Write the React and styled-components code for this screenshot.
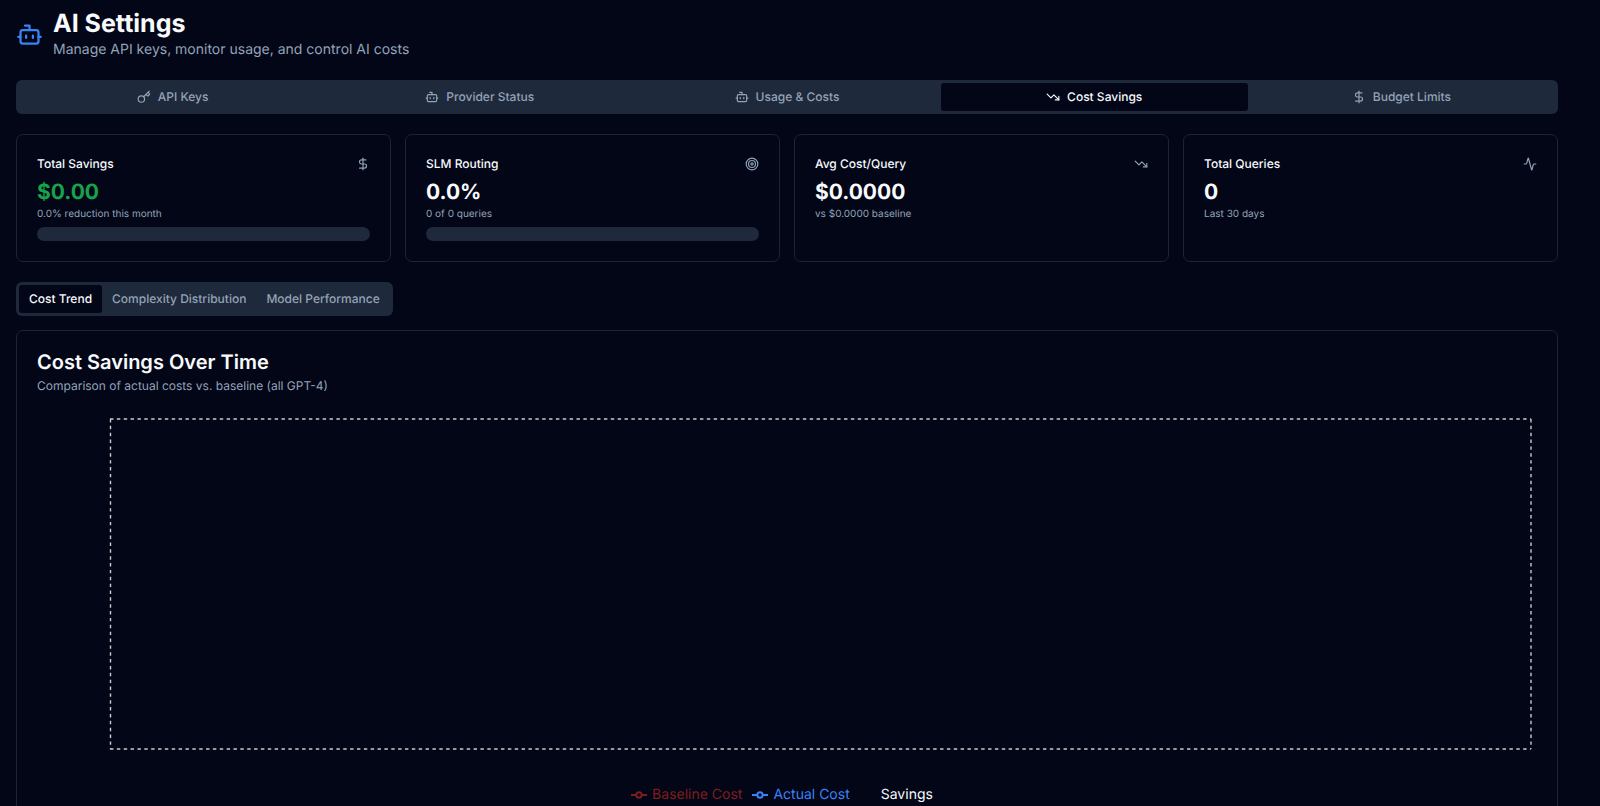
import React, { useState } from "react";
import styled, { createGlobalStyle } from "styled-components";
import { Activity, Bot, DollarSign, Key, Target, TrendingDown } from "lucide-react";

const GlobalStyle = createGlobalStyle`
    * {
        box-sizing: border-box;
    }

    body {
        margin: 0;
        background: #020617;
        color: #f8fafc;
        font-family: Inter, "Liberation Sans", sans-serif;
        text-rendering: geometricPrecision;
    }

    h1, h2, h3, p, ul {
        margin: 0;
        padding: 0;
    }
`;

const Page = styled.main`
    display: flex;
    flex-direction: column;
    gap: 20px;
    padding: 9px 42px 20px 16px;
`;

const Header = styled.header`
    display: flex;
    align-items: center;
    gap: 10px;
    color: #3b82f6;
`;

const Title = styled.h1`
    color: #f8fafc;
    font-size: 25px;
    font-weight: 700;
    line-height: 31px;
`;

const Subtitle = styled.p`
    color: #94a3b8;
    font-size: 14px;
    line-height: 20px;
`;

const MainTabs = styled.nav`
    display: grid;
    grid-template-columns: repeat(5, 1fr);
    padding: 3px;
    border-radius: 6px;
    background: #1e293b;
`;

const SubTabs = styled.nav`
    display: flex;
    align-self: flex-start;
    padding: 3px;
    border-radius: 6px;
    background: #1e293b;
`;

const Tab = styled.button`
    display: flex;
    align-items: center;
    justify-content: center;
    gap: 7px;
    padding: 5px 10px;
    border: 0;
    border-radius: 3px;
    background: ${props => props.$active ? "#020617" : "transparent"};
    color: ${props => props.$active ? "#f8fafc" : "#94a3b8"};
    font-family: inherit;
    font-size: 12px;
    font-weight: 500;
    line-height: 18px;
    text-rendering: inherit;
    cursor: pointer;
`;

const Stats = styled.section`
    display: grid;
    grid-template-columns: repeat(4, 1fr);
    gap: 14px;
`;

const Card = styled.div`
    padding: 20px;
    border: 1px solid #1a2436;
    border-radius: 7px;
`;

const StatHeader = styled.div`
    display: flex;
    align-items: center;
    justify-content: space-between;
    margin-bottom: 7px;
    color: #94a3b8;
`;

const StatTitle = styled.h3`
    color: #f8fafc;
    font-size: 12px;
    font-weight: 500;
    line-height: 17px;
`;

const StatValue = styled.p`
    color: ${props => props.$positive ? "#16a34a" : "#f8fafc"};
    font-size: 21px;
    font-weight: 700;
    line-height: 28px;
`;

const StatNote = styled.p`
    color: #94a3b8;
    font-size: 10px;
    line-height: 14px;
`;

const Progress = styled.div`
    height: 14px;
    margin-top: 6px;
    overflow: hidden;
    border-radius: 7px;
    background: #1e293b;
`;

const ProgressFill = styled.div`
    height: 100%;
    background: #3b82f6;
`;

const Details = styled.section`
    display: flex;
    flex-direction: column;
    gap: 14px;
`;

const ChartTitle = styled.h2`
    margin-bottom: 4px;
    font-size: 20px;
    font-weight: 600;
    line-height: 22px;
`;

const ChartNote = styled.p`
    color: #94a3b8;
    font-size: 12px;
    line-height: 17px;
`;

const Plot = styled.div`
    margin: 25px 6px 36px 73px;
`;

const Grid = styled.svg`
    display: block;
    width: 100%;
    height: 330px;
    overflow: visible;
    stroke: #ccc;
    stroke-width: 1.4;
    stroke-dasharray: 3.43 3.43;
`;

const Legend = styled.ul`
    display: flex;
    justify-content: center;
    list-style: none;
`;

const LegendItem = styled.li`
    display: flex;
    align-items: center;
    gap: 5px;
    margin-right: 10px;
    color: ${props => props.$color};
    font-size: 14px;
    line-height: 20px;
`;

const mainTabs = [
    { label: "API Keys", icon: Key },
    { label: "Provider Status", icon: Bot },
    { label: "Usage & Costs", icon: Bot },
    { label: "Cost Savings", icon: TrendingDown },
    { label: "Budget Limits", icon: DollarSign },
];

const subTabs = ["Cost Trend", "Complexity Distribution", "Model Performance"];

const stats = [
    { title: "Total Savings", value: "$0.00", note: "0.0% reduction this month", icon: DollarSign, positive: true, progress: 0 },
    { title: "SLM Routing", value: "0.0%", note: "0 of 0 queries", icon: Target, progress: 0 },
    { title: "Avg Cost/Query", value: "$0.0000", note: "vs $0.0000 baseline", icon: TrendingDown },
    { title: "Total Queries", value: "0", note: "Last 30 days", icon: Activity },
];

const series = [
    { name: "Baseline Cost", color: "#7f1d1d", marker: true },
    { name: "Actual Cost", color: "#3b82f6", marker: true },
    { name: "Savings", color: "#f8fafc", marker: false },
];

const StatCard = ({ title, value, note, icon: Icon, positive, progress }) => (
    <Card>
        <StatHeader>
            <StatTitle>{title}</StatTitle>
            <Icon size={14} />
        </StatHeader>
        <StatValue $positive={positive}>{value}</StatValue>
        <StatNote>{note}</StatNote>
        {progress !== undefined && (
            <Progress role="progressbar" aria-valuenow={progress} aria-label={title}>
                <ProgressFill style={{ width: `${progress}%` }} />
            </Progress>
        )}
    </Card>
);

const LineMarker = ({ visible }) => (
    <svg width="16" height="16" viewBox="0 0 32 32" fill="none" stroke="currentColor" strokeWidth="4">
        {visible && <path d="M0 16h10.67M21.33 16H32" />}
        {visible && <circle cx="16" cy="16" r="5.33" />}
    </svg>
);

const App = () => {
    const [mainTab, setMainTab] = useState("Cost Savings");
    const [subTab, setSubTab] = useState("Cost Trend");

    return (
        <Page>
            <GlobalStyle />
            <Header>
                <Bot size={27} />
                <div>
                    <Title>AI Settings</Title>
                    <Subtitle>Manage API keys, monitor usage, and control AI costs</Subtitle>
                </div>
            </Header>

            <MainTabs>
                {mainTabs.map(({ label, icon: Icon }) => (
                    <Tab key={label} $active={label === mainTab} onClick={() => setMainTab(label)}>
                        <Icon size={14} />
                        {label}
                    </Tab>
                ))}
            </MainTabs>

            <Stats>
                {stats.map(stat => <StatCard key={stat.title} {...stat} />)}
            </Stats>

            <Details>
                <SubTabs>
                    {subTabs.map(label => (
                        <Tab key={label} $active={label === subTab} onClick={() => setSubTab(label)}>
                            {label}
                        </Tab>
                    ))}
                </SubTabs>

                <Card>
                    <ChartTitle>Cost Savings Over Time</ChartTitle>
                    <ChartNote>Comparison of actual costs vs. baseline (all GPT-4)</ChartNote>
                    <Plot>
                        <Grid>
                            <line x1="0" y1="0" x2="100%" y2="0" />
                            <line x1="0" y1="100%" x2="100%" y2="100%" />
                            <line x1="0.5" y1="0" x2="0.5" y2="100%" />
                            <line x1="100%" y1="0" x2="100%" y2="100%" />
                        </Grid>
                    </Plot>
                    <Legend>
                        {series.map(({ name, color, marker }) => (
                            <LegendItem key={name} $color={color}>
                                <LineMarker visible={marker} />
                                {name}
                            </LegendItem>
                        ))}
                    </Legend>
                </Card>
            </Details>
        </Page>
    );
};

export default App;
